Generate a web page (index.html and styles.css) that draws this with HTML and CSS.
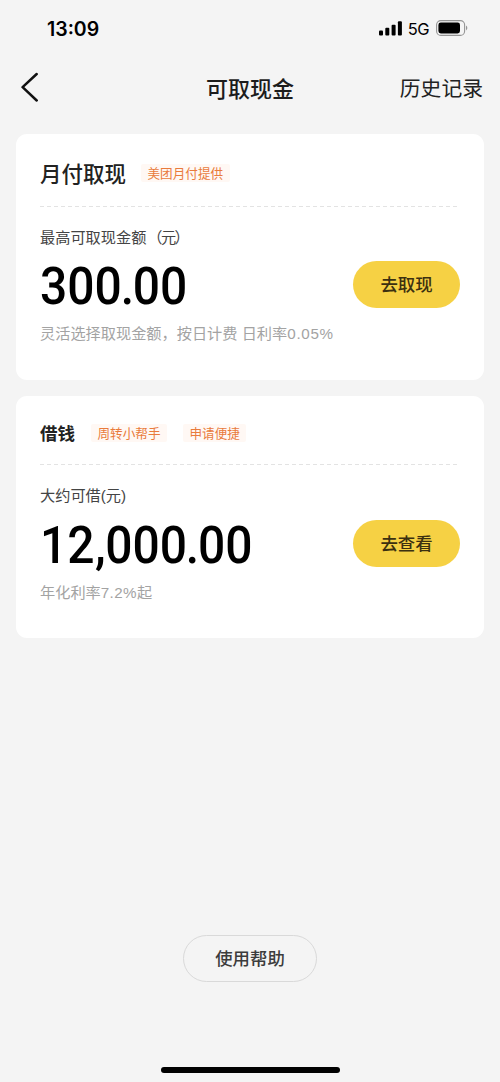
FILE: index.html
```html
<!DOCTYPE html>
<html lang="zh-CN">
<head>
<meta charset="utf-8">
<meta name="viewport" content="width=device-width, initial-scale=1">
<title>可取现金</title>
<link rel="stylesheet" href="styles.css">
</head>
<body>
<div class="screen">
  <header class="status">
    <span class="time">13:09</span>
    <div class="indicators">
      <svg class="signal" width="23" height="15" viewBox="0 0 23 15"><rect x="0" y="9.5" width="4" height="5" rx="1"/><rect x="6.3" y="6.8" width="4" height="7.7" rx="1"/><rect x="12.6" y="3.8" width="4" height="10.7" rx="1"/><rect x="18.9" y="0.3" width="4" height="14.2" rx="1"/></svg>
      <span class="network">5G</span>
      <svg class="battery" width="32" height="16" viewBox="0 0 32 16"><rect x="0.6" y="0.6" width="28" height="14.8" rx="4.2" fill="none" stroke="#949494" stroke-width="1.1"/><rect x="2.4" y="2.6" width="21.6" height="10.8" rx="2.4"/><path d="M30 5.6c1.8.8 1.8 4 0 4.8z" fill="#949494"/></svg>
    </div>
  </header>
  <nav class="nav">
    <svg class="back" width="20" height="30" viewBox="0 0 20 30"><path d="M16.7 2 2.6 15.2 16.7 28.5" fill="none" stroke="#111" stroke-width="2.5" stroke-linecap="round" stroke-linejoin="round"/></svg>
    <h1 class="nav-title">可取现金</h1>
    <a class="history">历史记录</a>
  </nav>
  <main class="cards">
    <section class="card">
      <div class="card-head">
        <h2 class="product brand">月付取现</h2>
        <span class="tag">美团月付提供</span>
      </div>
      <div class="divider"></div>
      <div class="card-body">
        <div class="info">
          <p class="label">最高可取现金额<span class="open">（</span>元<span class="close">）</span></p>
          <p class="amount">300<span class="point">.</span>00</p>
          <p class="note">灵活选择取现金额，按日计费 日利率<span class="rate">0.05%</span></p>
        </div>
        <button class="action">去取现</button>
      </div>
    </section>
    <section class="card loan">
      <div class="card-head">
        <h2 class="product">借钱</h2>
        <span class="tag">周转小帮手</span>
        <span class="tag">申请便捷</span>
      </div>
      <div class="divider"></div>
      <div class="card-body">
        <div class="info">
          <p class="label">大约可借(元)</p>
          <p class="amount">12<span class="comma">,</span>000<span class="point">.</span>00</p>
          <p class="note">年化利率<span class="rate">7.2%</span>起</p>
        </div>
        <button class="action">去查看</button>
      </div>
    </section>
  </main>
  <footer class="footer">
    <button class="help">使用帮助</button>
    <div class="home-bar"></div>
  </footer>
</div>
</body>
</html>
```
FILE: styles.css
```css
* { box-sizing: border-box; }
body {
  margin: 0;
  background: #f4f4f4;
  font-family: "Liberation Sans", "Noto Sans CJK SC", sans-serif;
  color: #222;
}
h1, h2, p { margin: 0; }
button { padding: 0 0 2px; border: 0; font-family: "Noto Sans CJK SC", sans-serif; }
.screen { display: flex; flex-direction: column; height: 1082px; }

.status {
  display: flex;
  justify-content: space-between;
  align-items: center;
  height: 56px;
  padding: 0 32px 0 47px;
  color: #000;
}
.time { font: 600 19.5px/24px Inter, sans-serif; letter-spacing: 0; padding-top: 1px; }
.indicators { display: flex; align-items: center; }
.network { margin: 1px 7px 0 6px; font: 400 16.5px/20px Inter, sans-serif; letter-spacing: -0.6px; }

.nav {
  display: grid;
  grid-template-columns: 1fr auto 1fr;
  align-items: center;
  height: 64px;
  padding: 0 17px 2px 20px;
}
.nav-title { font: 500 22px/32px "Noto Sans CJK SC", sans-serif; color: #1c1c1c; margin-left: -3px; }
.history { justify-self: end; font: 400 20.8px/32px "Noto Sans CJK SC", sans-serif; color: #222; }

.cards { display: flex; flex-direction: column; gap: 16px; padding: 13.5px 16px 0; }
.card { height: 246px; padding: 0 24px; border-radius: 11px; background: #fff; }
.card-head { display: flex; align-items: center; height: 72px; padding-top: 7px; }
.product { font: 700 17.5px/26px "Noto Sans CJK SC", sans-serif; color: #222; }
.brand { font-weight: 500; font-size: 21.5px; padding-bottom: 1px; }
.tag {
  height: 18px;
  margin-left: 16px;
  padding: 0 6.5px;
  border-radius: 2px;
  background: #fff8f4;
  color: #e97b3c;
  font: 400 12.6px/17px "Noto Sans CJK SC", sans-serif;
}
.brand + .tag { margin-left: 15px; }
.divider {
  height: 1px;
  background: repeating-linear-gradient(90deg, #e3e3e3 0 4px, transparent 4px 7px);
}
.card-body { display: flex; justify-content: space-between; padding-top: 20px; }
.info { white-space: nowrap; }
.label { font-size: 15.2px; line-height: 22px; color: #444; }
.open { margin-left: 1px; margin-right: -1.5px; }
.close { margin-left: -1.8px; }
.amount {
  margin-top: 11px;
  color: #000;
  font: 500 51px/54px Roboto, sans-serif;
  letter-spacing: 0;
  transform: scaleX(0.94);
  transform-origin: left;
}
.point { margin: 0 -1.2px; }
.comma { margin: 0 -0.6px 0 0.6px; }
.note { margin-top: 8px; font-size: 15.2px; line-height: 24px; color: #a3a3a3; }
.rate { letter-spacing: 0.7px; }
.action {
  flex: none;
  width: 107px;
  height: 47px;
  margin-top: 34.5px;
  border-radius: 24px;
  background: #f6d144;
  color: #3c3010;
  font-size: 17.4px;
  font-weight: 500;
}
.loan { height: 242.5px; }
.loan .card-head { height: 68.5px; }
.loan .amount { padding-top: 1px; margin-bottom: -1px; }
.loan .note { padding-top: 1px; }
.loan .rate { letter-spacing: 0.4px; }

.footer { display: flex; flex-direction: column; align-items: center; margin-top: auto; }
.help {
  width: 134px;
  height: 47px;
  border: 1px solid #d9d9d9;
  border-radius: 24px;
  background: transparent;
  color: #3c3c3c;
  font-size: 17.4px;
  font-weight: 500;
}
.home-bar { width: 179px; height: 6px; margin: 85px 0 9px; border-radius: 3px; background: #000; }
```
